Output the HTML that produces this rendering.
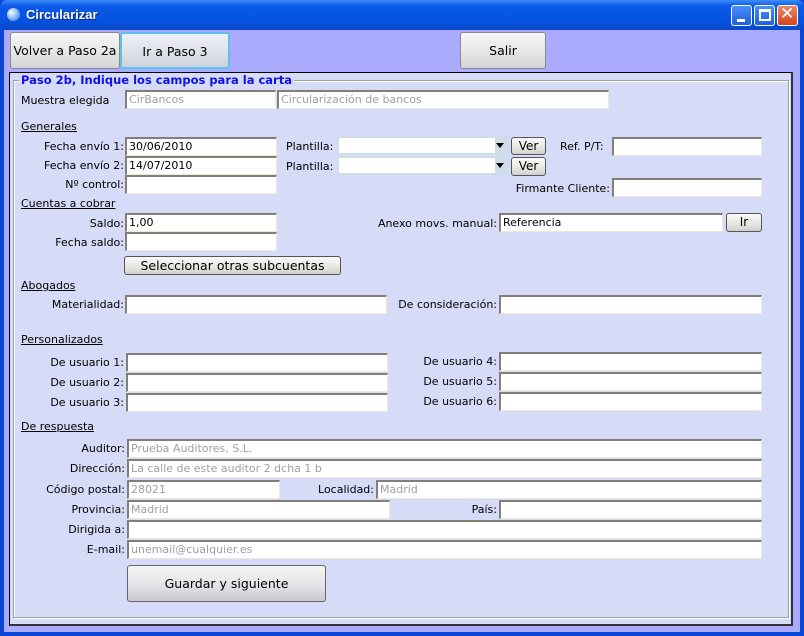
<!DOCTYPE html>
<html><head><meta charset="utf-8"><style>
*{box-sizing:border-box;margin:0;padding:0}
body{width:804px;height:636px;overflow:hidden;background:#0a46d8;font-family:"DejaVu Sans","Liberation Sans",sans-serif;font-size:11px;color:#000;position:relative}
.a{position:absolute}
.title{left:0;top:0;width:804px;height:30px;background:linear-gradient(#3d8cf7,#0a5ae8 20%,#0553e0 70%,#0a48c8);border-radius:7px 7px 0 0}
.title span{position:absolute;left:26px;top:7px;color:#fff;font-weight:bold;font-size:13px;font-family:"Liberation Sans",sans-serif;text-shadow:1px 1px #0a2a80}
.ico{left:7px;top:8px;width:13px;height:13px;border-radius:50%;background:radial-gradient(circle at 35% 35%,#fff,#9cc4ff 40%,#2a64d0)}
.wb{top:5px;width:21px;height:21px;border:1px solid #fff;border-radius:3px;background:linear-gradient(#4c8ef8,#1f5fe0)}
.client{left:4px;top:30px;width:796px;height:602px;background:#aaaaff}
.btn{position:absolute;border:1px solid #8a8a8a;border-radius:3px;background:linear-gradient(#f6f6f6,#e8e8e8 50%,#d4d4d4);text-align:center;font-size:12.5px;font-family:"DejaVu Sans",sans-serif}
.sb{font-size:12px;border-color:#555;background:linear-gradient(#fafafa,#e6e6e0 60%,#d0d0cc)}
.panel{left:9px;top:72px;width:784px;height:554px;background:#d6dcf8;border:1px solid #000;border-right:2px solid #333;border-bottom:2px solid #333}
.grp{left:13px;top:80px;width:776px;height:538px;border:1px solid #a0a0a0;box-shadow:1px 1px 0 #fff inset,1px 1px 0 #fff}
.leg{left:19px;top:73px;padding:0 2px;background:#d6dcf8;color:#1010e8;font-weight:bold;font-size:11.5px}
.in{position:absolute;height:19px;background:#fff;border-top:2px solid #808078;border-left:2px solid #808078;border-right:1px solid #ece9d8;border-bottom:1px solid #ece9d8;padding-left:2px;line-height:16px;white-space:nowrap;overflow:hidden}
.g{color:#a0a0a0}
.l{position:absolute;white-space:nowrap;text-align:right}
.h{position:absolute;text-decoration:underline}
.cb{position:absolute;height:19px;background:#cfdde8}
.cb i{position:absolute;left:2px;top:2px;right:14px;bottom:2px;background:#fff}
.cb b{position:absolute;right:5px;top:7px;border-left:4px solid transparent;border-right:4px solid transparent;border-top:5px solid #000}
</style></head><body>
<div class="a title"><div class="a ico"></div><span>Circularizar</span>
<div class="a wb" style="left:731px"><div class="a" style="left:5px;top:13px;width:8px;height:3px;background:#fff"></div></div>
<div class="a wb" style="left:754px"><div class="a" style="left:4px;top:3px;width:12px;height:12px;border:2px solid #fff;border-top-width:3px"></div></div>
<div class="a wb" style="left:777px;background:linear-gradient(#e88a6a,#d2431c)"><div class="a" style="left:2px;top:-2px;color:#fff;font-weight:bold;font-size:17px">✕</div></div>
</div>
<div class="a client"></div>
<div class="btn" style="left:10px;top:32px;width:110px;height:37px;line-height:35px">Volver a Paso 2a</div>
<div class="btn" style="left:120px;top:32px;width:110px;height:37px;line-height:35px;border:2px solid #5ac4e8;background:linear-gradient(#eef0f8,#e0e2ec 50%,#cfd2dc)">Ir a Paso 3</div>
<div class="btn" style="left:460px;top:32px;width:86px;height:37px;line-height:35px">Salir</div>
<div class="a panel"></div>
<div class="a grp"></div>
<div class="a leg">Paso 2b, Indique los campos para la carta</div>

<div class="l" style="left:21px;top:94px">Muestra elegida</div>
<div class="in g" style="left:125px;top:90px;width:151px">CirBancos</div>
<div class="in g" style="left:277px;top:90px;width:332px">Circularización de bancos</div>

<div class="h" style="left:21px;top:120px">Generales</div>
<div class="l" style="left:20px;width:104px;top:140px">Fecha envío 1:</div>
<div class="in" style="left:125px;top:137px;width:152px">30/06/2010</div>
<div class="l" style="left:20px;width:104px;top:159px">Fecha envío 2:</div>
<div class="in" style="left:125px;top:156px;width:152px">14/07/2010</div>
<div class="l" style="left:20px;width:104px;top:178px">Nº control:</div>
<div class="in" style="left:125px;top:175px;width:152px"></div>
<div class="l" style="left:286px;top:140px">Plantilla:</div>
<div class="cb" style="left:337px;top:136px;width:172px"><i></i><b></b></div>
<div class="l" style="left:286px;top:160px">Plantilla:</div>
<div class="cb" style="left:337px;top:156px;width:172px"><i></i><b></b></div>
<div class="btn sb" style="left:511px;top:137px;width:35px;height:18px;line-height:16px">Ver</div>
<div class="btn sb" style="left:511px;top:157px;width:35px;height:19px;line-height:17px">Ver</div>
<div class="l" style="left:560px;top:140px">Ref. P/T:</div>
<div class="in" style="left:612px;top:137px;width:150px"></div>
<div class="l" style="left:400px;width:210px;top:182px">Firmante Cliente:</div>
<div class="in" style="left:612px;top:178px;width:150px"></div>

<div class="h" style="left:21px;top:197px">Cuentas a cobrar</div>
<div class="l" style="left:20px;width:104px;top:217px">Saldo:</div>
<div class="in" style="left:125px;top:213px;width:152px">1,00</div>
<div class="l" style="left:20px;width:104px;top:236px">Fecha saldo:</div>
<div class="in" style="left:125px;top:232px;width:152px"></div>
<div class="l" style="left:300px;width:197px;top:217px">Anexo movs. manual:</div>
<div class="in" style="left:499px;top:213px;width:224px">Referencia</div>
<div class="btn sb" style="left:726px;top:213px;width:36px;height:19px;line-height:17px">Ir</div>
<div class="btn sb" style="left:124px;top:256px;width:217px;height:19px;line-height:17px;font-size:12.5px">Seleccionar otras subcuentas</div>

<div class="h" style="left:21px;top:279px">Abogados</div>
<div class="l" style="left:20px;width:104px;top:298px">Materialidad:</div>
<div class="in" style="left:125px;top:295px;width:262px"></div>
<div class="l" style="left:300px;width:197px;top:298px">De consideración:</div>
<div class="in" style="left:499px;top:295px;width:263px"></div>

<div class="h" style="left:21px;top:333px">Personalizados</div>
<div class="l" style="left:20px;width:104px;top:356px">De usuario 1:</div>
<div class="in" style="left:126px;top:353px;width:262px"></div>
<div class="l" style="left:20px;width:104px;top:376px">De usuario 2:</div>
<div class="in" style="left:126px;top:373px;width:262px"></div>
<div class="l" style="left:20px;width:104px;top:396px">De usuario 3:</div>
<div class="in" style="left:126px;top:393px;width:262px"></div>
<div class="l" style="left:300px;width:197px;top:355px">De usuario 4:</div>
<div class="in" style="left:499px;top:352px;width:263px"></div>
<div class="l" style="left:300px;width:197px;top:375px">De usuario 5:</div>
<div class="in" style="left:499px;top:372px;width:263px"></div>
<div class="l" style="left:300px;width:197px;top:395px">De usuario 6:</div>
<div class="in" style="left:499px;top:392px;width:263px"></div>

<div class="h" style="left:21px;top:420px">De respuesta</div>
<div class="l" style="left:20px;width:105px;top:442px">Auditor:</div>
<div class="in g" style="left:127px;top:439px;width:635px">Prueba Auditores, S.L.</div>
<div class="l" style="left:20px;width:105px;top:462px">Dirección:</div>
<div class="in g" style="left:127px;top:459px;width:635px">La calle de este auditor 2 dcha 1 b</div>
<div class="l" style="left:20px;width:105px;top:483px">Código postal:</div>
<div class="in g" style="left:127px;top:480px;width:153px">28021</div>
<div class="l" style="left:280px;width:94px;top:483px">Localidad:</div>
<div class="in g" style="left:376px;top:480px;width:386px">Madrid</div>
<div class="l" style="left:20px;width:105px;top:503px">Provincia:</div>
<div class="in g" style="left:127px;top:500px;width:263px">Madrid</div>
<div class="l" style="left:400px;width:97px;top:503px">País:</div>
<div class="in" style="left:499px;top:500px;width:263px"></div>
<div class="l" style="left:20px;width:105px;top:523px">Dirigida a:</div>
<div class="in" style="left:127px;top:520px;width:635px"></div>
<div class="l" style="left:20px;width:105px;top:543px">E-mail:</div>
<div class="in g" style="left:127px;top:540px;width:635px">unemail@cualquier.es</div>
<div class="btn" style="left:127px;top:565px;width:199px;height:37px;line-height:35px;border-color:#666;background:linear-gradient(#f4f4f4,#e6e6ea 50%,#c8c8d0)">Guardar y siguiente</div>
</body></html>
